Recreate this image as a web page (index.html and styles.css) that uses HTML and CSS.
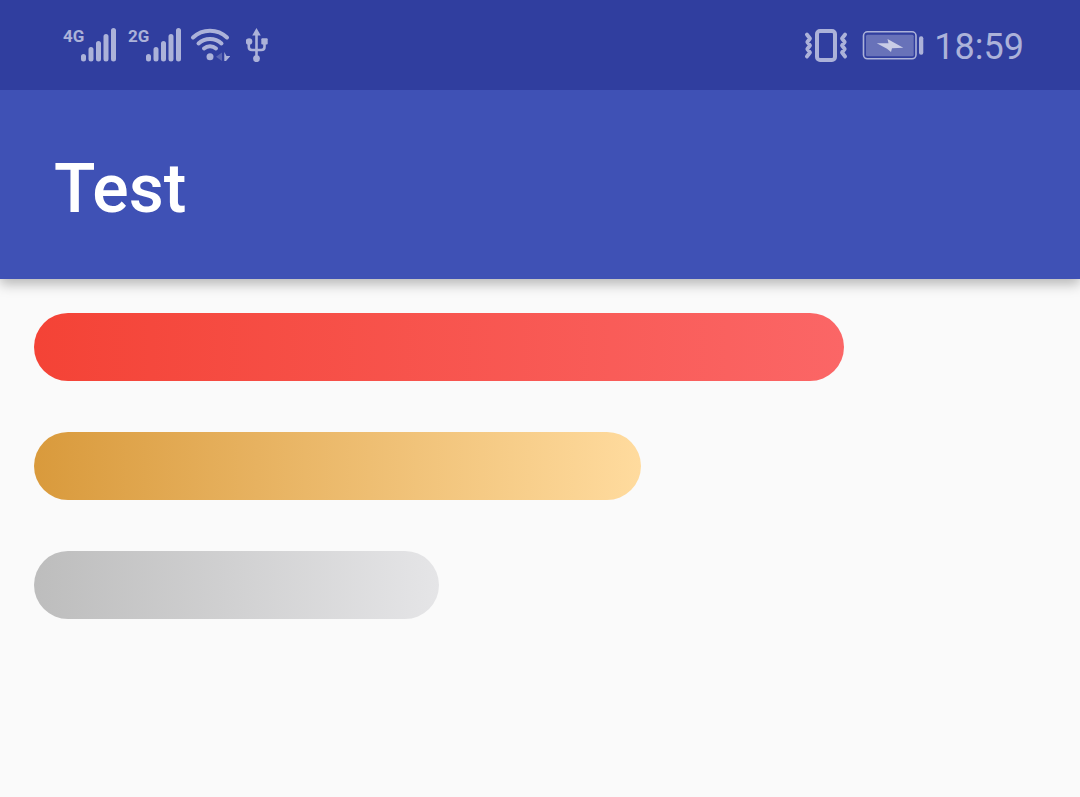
FILE: index.html
```html
<!DOCTYPE html>
<html lang="en">
<head>
<meta charset="utf-8">
<meta name="viewport" content="width=device-width, initial-scale=1">
<title>Test</title>
<link rel="stylesheet" href="styles.css">
</head>
<body>
<div class="status-bar">
  <div class="status-group">
    <div class="network">
      <span class="network-type">4G</span>
      <svg class="icon" width="35" height="34" viewBox="0 0 35 34" aria-hidden="true">
        <path class="line" stroke-width="5" d="M2.500 28.500V31M10 21.500V31M17.500 15.500V31M25 8.500V31M32.500 2.500V31"/>
      </svg>
    </div>
    <div class="network">
      <span class="network-type">2G</span>
      <svg class="icon" width="35" height="34" viewBox="0 0 35 34" aria-hidden="true">
        <path class="line" stroke-width="5" d="M2.500 28.500V31M10 21.500V31M17.500 15.500V31M25 8.500V31M32.500 2.500V31"/>
      </svg>
    </div>
    <svg class="icon wifi" width="40" height="34" viewBox="0 0 40 34" aria-hidden="true">
      <path class="line" stroke-width="4" d="M3 9.500A24.500 24.500 0 0 1 37 9.500M8.500 15.500A17 17 0 0 1 31.500 15.500M14 20.500A9 9 0 0 1 26 20.500"/>
      <circle cx="20" cy="28.700" r="3.500"/>
      <path opacity=".35" d="M26 28.700 32 24.500V33Z"/>
      <path d="M34.300 24 36.500 28H40.500L36 33H34.300Z"/>
    </svg>
    <svg class="icon" width="22" height="34" viewBox="0 0 22 34" aria-hidden="true">
      <path class="line" stroke-width="2.600" d="M10.500 6V30M2.800 14V19Q2.800 22 6 22H15.300Q18.500 22 18.500 19V14"/>
      <path d="M10.500 0 14.800 7.500H6.200Z"/>
      <circle cx="3" cy="13.500" r="3.300"/>
      <rect x="15.300" y="10.300" width="6.400" height="6.200" rx="1"/>
      <circle cx="10.500" cy="30.700" r="3.400"/>
    </svg>
  </div>
  <div class="status-group">
    <svg class="icon" width="44" height="34" viewBox="0 0 44 34" aria-hidden="true">
      <rect class="line" stroke-width="4" x="13" y="3" width="18" height="29" rx="3"/>
      <path class="line" stroke-width="3.800" d="M2.900 6.500 6 10.500 3.300 14 6 17.500 3.300 21 6 24.500 2.900 28.500M41.100 6.500 38 10.500 40.700 14 38 17.500 40.700 21 38 24.500 41.100 28.500"/>
    </svg>
    <svg class="icon battery" width="62" height="30" viewBox="0 0 62 30" aria-hidden="true">
      <rect class="line" stroke-width="1.600" x="1.500" y="1.800" width="52.500" height="27" rx="4"/>
      <rect opacity=".45" x="4" y="4.700" width="47.700" height="21.600" rx="1.500"/>
      <rect x="57" y="6.300" width="4.300" height="18.500" rx="2"/>
      <path class="bolt" d="M14.700 13.300H26.500L25.500 9 41.300 17.700 30 18.300 29 22 25 18.700Z"/>
    </svg>
    <time class="clock">18:59</time>
  </div>
</div>
<header class="app-bar"><h1 class="app-title">Test</h1></header>
<main class="bars">
  <div class="bar bar-red" style="width:80%"></div>
  <div class="bar bar-gold" style="width:60%"></div>
  <div class="bar bar-silver" style="width:40%"></div>
</main>
</body>
</html>
```
FILE: styles.css
```css
* { box-sizing: border-box; }

body {
  margin: 0;
  background: #fafafa;
  font-family: Roboto, "Liberation Sans", sans-serif;
}

.status-bar {
  position: relative;
  z-index: 1;
  display: flex;
  justify-content: space-between;
  align-items: center;
  height: 90px;
  padding: 0 56px 0 63px;
  background: #303e9f;
  color: #acb2d9;
}

.status-group {
  display: flex;
  align-items: center;
}

.network {
  display: flex;
  align-items: flex-start;
  margin-right: 12px;
}

.network-type {
  width: 18px;
  font-size: 17px;
  font-weight: 700;
  line-height: 16px;
}

.icon {
  display: block;
  flex: none;
  fill: currentColor;
}

.line {
  fill: none;
  stroke: currentColor;
  stroke-linecap: round;
  stroke-linejoin: round;
}

.wifi {
  margin-left: -3px;
  margin-right: 16px;
}

.battery { margin: 0 10px 0 14px; }

.bolt { fill: #c9cde6; }

.clock {
  font-size: 36px;
  line-height: 44px;
  padding-top: 4px;
}

.app-bar {
  display: flex;
  align-items: center;
  min-height: 189px;
  padding: 8px 54px 0;
  background: #3f51b5;
  box-shadow: 0 5px 12px rgba(0, 0, 0, 0.28);
}

.app-title {
  margin: 0;
  color: #fff;
  font-size: 68px;
  font-weight: 500;
  line-height: 80px;
}

.bars {
  display: flex;
  flex-direction: column;
  gap: 51px;
  padding: 34px;
}

.bar {
  height: 68px;
  border-radius: 34px;
}

.bar-red { background: linear-gradient(90deg, #f44336, #fb6666); }
.bar-gold { background: linear-gradient(90deg, #d99a3c, #ffdb9e); }
.bar-silver { background: linear-gradient(90deg, #bdbdbd, #e5e5e7); }
```
